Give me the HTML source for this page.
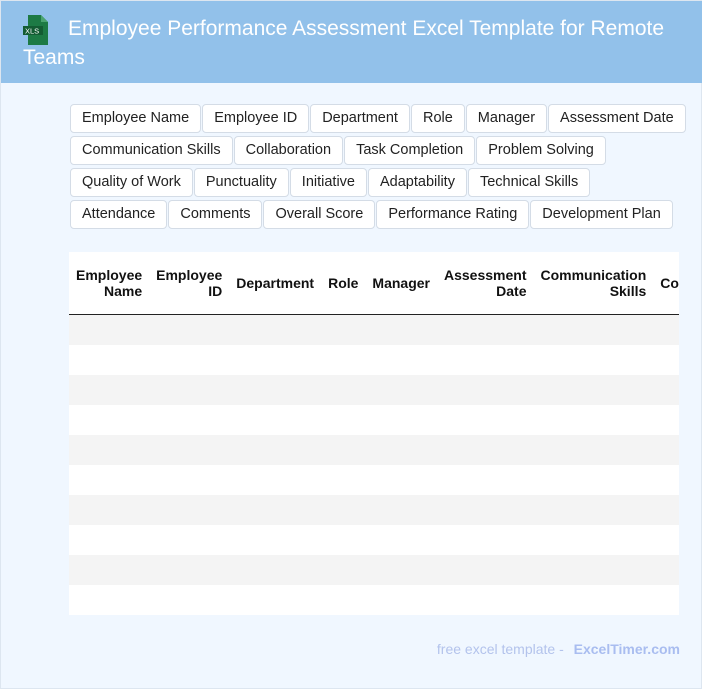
<!DOCTYPE html>
<html><head><meta charset="utf-8"><style>
*{box-sizing:border-box;margin:0;padding:0}
body{width:702px;height:689px;background:#f0f7ff;font-family:"Liberation Sans",Arial,sans-serif;position:relative;overflow:hidden;border:1px solid #dde6f0}
.hd{position:absolute;left:0;top:0;width:702px;height:82px;background:#92c1ea}
.hd h1{position:absolute;left:22px;top:13px;width:670px;font-weight:normal;font-size:21px;line-height:29px;color:#fff;text-indent:45px}
.ic{position:absolute;left:22px;top:14px}
.tags{position:absolute;left:69px;top:103px;width:630px}
.tag{display:inline-block;height:29px;line-height:27px;padding:0 11px;border:1px solid #d4dce6;border-radius:4px;background:#fff;font-size:14.5px;color:#222;margin:0 0 3px 0;margin-right:1px}
.tw{position:absolute;left:68px;top:251px;width:610px;height:363px;overflow:hidden;background:#fff}
table{border-collapse:collapse;white-space:nowrap}
th{font-size:14px;font-weight:bold;text-align:right;padding:0 7px;height:62px;border-bottom:1.5px solid #222;line-height:16px;color:#111}
.r{height:30px;background:#fff}
.g{background:#f4f4f4}
.ft{position:absolute;right:21px;top:640px;font-size:14px;color:#b3c3ec}
.ft b{color:#a9bdf0;margin-left:6px}
</style></head><body>
<div class="hd">
<svg class="ic" width="28" height="30" viewBox="0 0 28 30"><path d="M5 0h13l7 7v23H5z" fill="#1d7a45"/><path d="M18 0v7h7z" fill="#4aa470"/><rect x="0" y="11" width="20" height="9" fill="#135c33"/><text x="2" y="18.5" font-size="7.5" fill="#fff" font-family="Liberation Sans">XLS</text></svg>
<h1>Employee Performance Assessment Excel Template for Remote Teams</h1>
</div>
<div class="tags">
<span class="tag">Employee Name</span><span class="tag">Employee ID</span><span class="tag">Department</span><span class="tag">Role</span><span class="tag">Manager</span><span class="tag">Assessment Date</span><br>
<span class="tag">Communication Skills</span><span class="tag">Collaboration</span><span class="tag">Task Completion</span><span class="tag">Problem Solving</span><br>
<span class="tag">Quality of Work</span><span class="tag">Punctuality</span><span class="tag">Initiative</span><span class="tag">Adaptability</span><span class="tag">Technical Skills</span><br>
<span class="tag">Attendance</span><span class="tag">Comments</span><span class="tag">Overall Score</span><span class="tag">Performance Rating</span><span class="tag">Development Plan</span>
</div>
<div class="tw"><table>
<tr><th>Employee<br>Name</th><th>Employee<br>ID</th><th>Department</th><th>Role</th><th>Manager</th><th>Assessment<br>Date</th><th>Communication<br>Skills</th><th>Collaboration</th></tr>
</table>
<div class="r g"></div><div class="r"></div><div class="r g"></div><div class="r"></div><div class="r g"></div><div class="r"></div><div class="r g"></div><div class="r"></div><div class="r g"></div><div class="r"></div>
</div>
<div class="ft">free excel template - <b>ExcelTimer.com</b></div>
</body></html>
